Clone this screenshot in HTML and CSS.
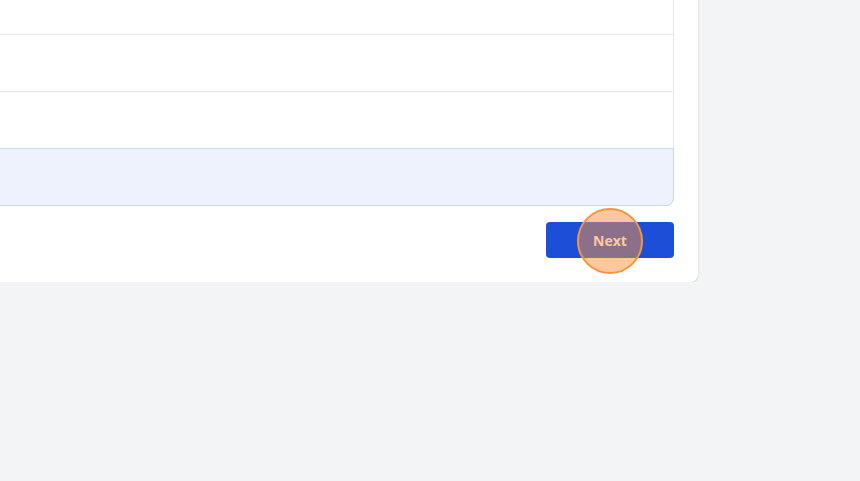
FILE: index.html
```html
<!DOCTYPE html>
<html>
<head>
<meta charset="utf-8">
<link rel="stylesheet" href="styles.css">
</head>
<body>
<div class="card">
  <div class="list">
    <div class="row"></div>
    <div class="row"></div>
    <div class="row"></div>
    <div class="row selected"></div>
  </div>
  <div class="actions">
    <div class="btn-wrap">
      <button class="btn">Next</button>
      <span class="highlight"></span>
    </div>
  </div>
</div>
</body>
</html>
```

FILE: styles.css
```css
html, body {
  margin: 0;
  padding: 0;
  background: #f3f4f6;
  font-family: Inter, "Open Sans", sans-serif;
  overflow: hidden;
}
.card {
  width: 690px;
  margin-left: -40px;
  margin-top: -47px;
  background: #ffffff;
  padding: 24px;
  border-radius: 0 0 8px 0;
  box-shadow: 0 1px 3px rgba(0, 0, 0, 0.10), 0 1px 2px rgba(0, 0, 0, 0.06);
}
.list {
  border: 1px solid #e5e7eb;
  border-radius: 0 0 8px 0;
  display: flex;
  flex-direction: column;
}
.row {
  height: 56px;
  border-top: 1px solid #e5e7eb;
}
.row:first-child {
  border-top: none;
}
.row.selected {
  background: #eef2fd;
  border: 1px solid #cbd6e6;
  margin: 0 -1px -1px -1px;
  border-radius: 0 0 8px 0;
}
.actions {
  display: flex;
  justify-content: flex-end;
  margin-top: 16px;
}
.btn-wrap {
  position: relative;
}
.btn {
  display: block;
  width: 128px;
  height: 36px;
  border: none;
  border-radius: 4px;
  background: #1d4ed8;
  color: #ffffff;
  font-family: "Open Sans", Inter, sans-serif;
  font-weight: 700;
  font-size: 14px;
  padding: 0;
}
.highlight {
  position: absolute;
  left: 31px;
  top: -14px;
  width: 62px;
  height: 62px;
  border: 2px solid #f5953f;
  border-radius: 50%;
  background: rgba(251, 146, 60, 0.5);
}
```
